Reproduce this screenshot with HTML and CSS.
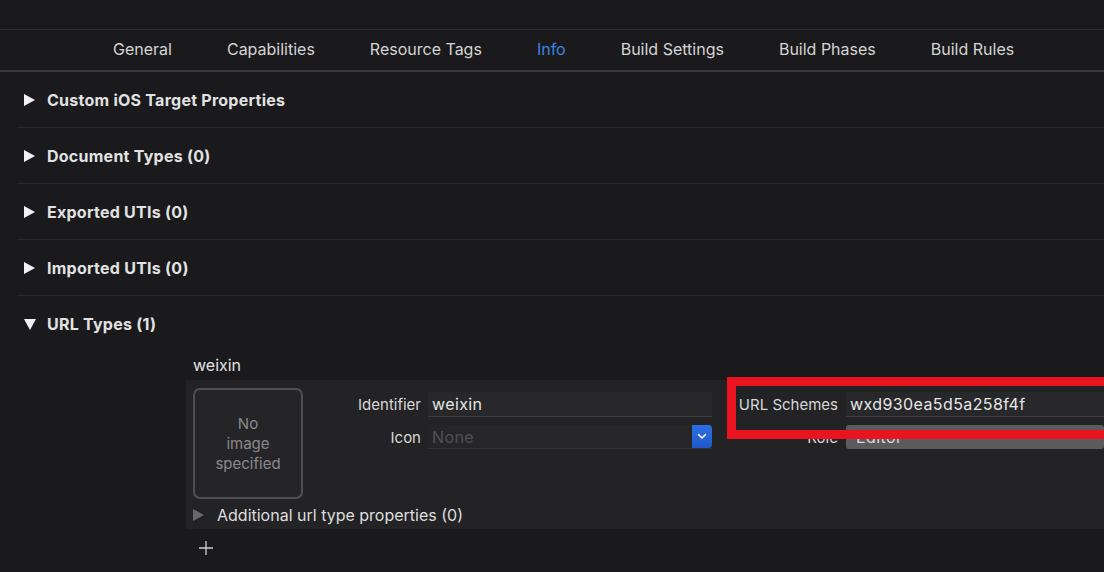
FILE: index.html
```html
<!DOCTYPE html>
<html>
<head>
<meta charset="utf-8">
<link rel="stylesheet" href="styles.css">
</head>
<body>
<div class="topbar"></div>
<nav class="tabs">
  <span class="tab">General</span>
  <span class="tab">Capabilities</span>
  <span class="tab">Resource Tags</span>
  <span class="tab active">Info</span>
  <span class="tab">Build Settings</span>
  <span class="tab">Build Phases</span>
  <span class="tab">Build Rules</span>
</nav>
<div class="sections">
  <div class="section"><span class="tri"></span><span class="title">Custom iOS Target Properties</span></div>
  <div class="section"><span class="tri"></span><span class="title">Document Types (0)</span></div>
  <div class="section"><span class="tri"></span><span class="title">Exported UTIs (0)</span></div>
  <div class="section"><span class="tri"></span><span class="title">Imported UTIs (0)</span></div>
  <div class="section open"><span class="tri down"></span><span class="title">URL Types (1)</span></div>
  <div class="urltypes">
    <div class="item-name">weixin</div>
    <div class="panel">
      <div class="panel-main">
        <div class="well">No<br>image<br>specified</div>
        <div class="fields">
          <div class="lbl">Identifier</div>
          <div class="field">weixin</div>
          <div class="lbl">URL Schemes</div>
          <div class="field wide">wxd930ea5d5a258f4f</div>
          <div class="lbl">Icon</div>
          <div class="field popup"><span class="placeholder">None</span><span class="popbtn"><svg width="10" height="7" viewBox="0 0 10 7"><path d="M1.5 1.5 L5 5 L8.5 1.5" fill="none" stroke="#fff" stroke-width="1.6" stroke-linecap="round" stroke-linejoin="round"/></svg></span></div>
          <div class="lbl">Role</div>
          <div class="field wide role">Editor</div>
        </div>
      </div>
      <div class="additional"><span class="tri grey"></span><span>Additional url type properties (0)</span></div>
    </div>
    <div class="plus"><svg width="16" height="16" viewBox="0 0 16 16"><path d="M8 1 V15 M1 8 H15" stroke="#cfcfcf" stroke-width="1.3"/></svg></div>
    <div class="redbox"></div>
  </div>
</div>
</body>
</html>
```
FILE: styles.css
```css
html, body {
  margin: 0;
  padding: 0;
  background: #1a1a1c;
  font-family: "Inter", "Liberation Sans", Arial, sans-serif;
  color: #dcdcdc;
  width: 1104px;
  height: 572px;
  overflow: hidden;
}
.topbar {
  height: 29px;
  background: #19191b;
  border-bottom: 1px solid #2c2c2e;
}
.tabs {
  display: flex;
  align-items: center;
  gap: 55px;
  padding-left: 113px;
  border-bottom: 2px solid #3a3a3c;
  font-size: 16px;
  color: #d4d4d4;
  box-sizing: border-box;
  height: 42px;
  padding-bottom: 2px;
}
.tab.active { color: #3e82e4; }
.sections { padding-left: 17px; }
.section {
  height: 55px;
  display: flex;
  align-items: center;
  padding-left: 7px;
  border-bottom: 1px solid #2a2a2c;
  font-weight: 700;
  font-size: 16px;
  letter-spacing: 0.25px;
  color: #e2e2e2;
}
.section.open { border-bottom: none; height: 56px; }
.tri {
  width: 0;
  height: 0;
  border-top: 6px solid transparent;
  border-bottom: 6px solid transparent;
  border-left: 11px solid #f2f2f2;
  margin-right: 12px;
}
.tri.down {
  border-left: 6px solid transparent;
  border-right: 6px solid transparent;
  border-top: 11px solid #f2f2f2;
  border-bottom: none;
  margin-right: 11px;
}
.tri.grey { border-left-color: #6a6a6c; margin-right: 13px; }
.urltypes {
  position: relative;
  padding-left: 169px;
  overflow: hidden;
  height: 220px;
}
.item-name {
  height: 28px;
  font-size: 16px;
  color: #e2e2e2;
  line-height: 27px;
  padding-left: 7px;
}
.panel {
  height: 149px;
  background: #232325;
}
.panel-main {
  display: flex;
  padding: 8px 0 0 7px;
}
.well {
  flex-shrink: 0;
  width: 106px;
  height: 107px;
  border: 2px solid #505052;
  border-radius: 7px;
  display: flex;
  align-items: center;
  justify-content: center;
  text-align: center;
  font-size: 15px;
  line-height: 20px;
  color: #8a8a8c;
  background: #252527;
}
.fields {
  flex: 1;
  display: grid;
  grid-template-columns: 118px 284px 119px 1fr;
  grid-template-rows: 25px 24px;
  column-gap: 7px;
  row-gap: 8px;
  align-items: center;
  padding-top: 4px;
  font-size: 16px;
}
.lbl {
  text-align: right;
  color: #d8d8d8;
  font-size: 15px;
}
.field {
  height: 100%;
  display: flex;
  align-items: center;
  padding-left: 4px;
  background: #28282a;
  border-bottom: 1px solid #3c3c3e;
  box-sizing: border-box;
  color: #e6e6e6;
  letter-spacing: 0.4px;
}
.field.wide { margin-left: 1px; }
.field.popup {
  background: #262628;
  border-bottom: 1px solid #353537;
  justify-content: space-between;
}
.placeholder { color: #515153; }
.popbtn {
  width: 20px;
  height: 23px;
  background: linear-gradient(#2d6ee6, #1f58c8);
  border-radius: 0 4px 4px 0;
  display: flex;
  align-items: center;
  justify-content: center;
}
.field.role {
  background: #5b5b5d;
  border-radius: 3px;
  border-bottom: none;
  color: #d8d8d8;
  padding-left: 10px;
}
.additional {
  display: flex;
  align-items: center;
  height: 26px;
  margin-top: 3px;
  padding-left: 7px;
  font-size: 16px;
  color: #dedede;
}
.redbox {
  position: absolute;
  left: 710px;
  top: 25px;
  width: 500px;
  height: 44px;
  border: 9px solid #ea1420;
}
.plus {
  padding: 11px 0 0 12px;
  height: 16px;
}
```
